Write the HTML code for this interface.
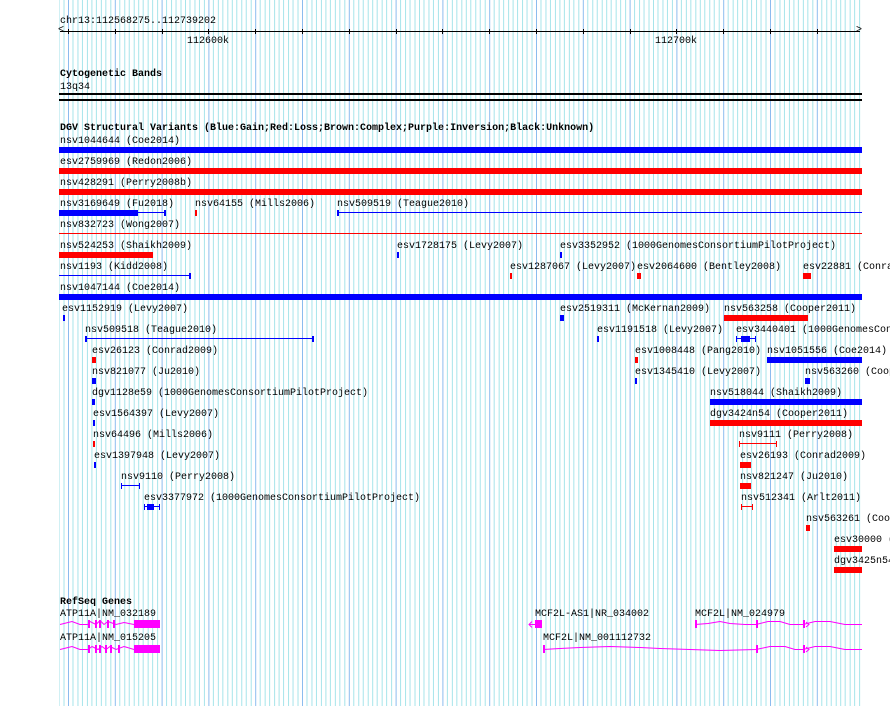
<!DOCTYPE html>
<html><head><meta charset="utf-8"><style>
html,body{margin:0;width:890px;height:706px;overflow:hidden}
body{background:#fff;position:relative;font-family:"Liberation Mono",monospace;font-size:10px;color:#000}
.t{position:absolute;line-height:10px;white-space:pre;margin-top:2px}
.h{font-weight:bold}
.b{position:absolute;height:6px}
.bl{background:#0000ff}.rd{background:#ff0000}.k{background:#000}
</style></head><body>
<svg style="position:absolute;left:0;top:0" width="890" height="706" shape-rendering="crispEdges">
<defs><pattern id="gp" patternUnits="userSpaceOnUse" x="21.2" y="0" width="46.8" height="706">
<rect x="0" y="0" width="1" height="706" fill="#8cbcee"/>
<rect x="4.68" y="0" width="1" height="706" fill="#a6e4ea"/>
<rect x="9.36" y="0" width="1" height="706" fill="#a6e4ea"/>
<rect x="14.04" y="0" width="1" height="706" fill="#a6e4ea"/>
<rect x="18.72" y="0" width="1" height="706" fill="#a6e4ea"/>
<rect x="23.4" y="0" width="1" height="706" fill="#a6e4ea"/>
<rect x="28.08" y="0" width="1" height="706" fill="#a6e4ea"/>
<rect x="32.76" y="0" width="1" height="706" fill="#a6e4ea"/>
<rect x="37.44" y="0" width="1" height="706" fill="#a6e4ea"/>
<rect x="42.12" y="0" width="1" height="706" fill="#a6e4ea"/>
</pattern></defs>
<rect x="59" y="0" width="802" height="706" fill="url(#gp)"/>
</svg>

<div class="t" style="left:60px;top:15px">chr13:112568275..112739202</div>
<div class="b k" style="left:60px;top:31px;width:800px;height:1px"></div>
<div class="t" style="left:58px;top:24px">&lt;</div>
<div class="t" style="left:856px;top:24px">&gt;</div>
<div class="b k" style="left:68px;top:29px;width:1px;height:5px"></div>
<div class="b k" style="left:115px;top:29px;width:1px;height:5px"></div>
<div class="b k" style="left:162px;top:29px;width:1px;height:5px"></div>
<div class="b k" style="left:208px;top:29px;width:1px;height:5px"></div>
<div class="b k" style="left:255px;top:29px;width:1px;height:5px"></div>
<div class="b k" style="left:302px;top:29px;width:1px;height:5px"></div>
<div class="b k" style="left:349px;top:29px;width:1px;height:5px"></div>
<div class="b k" style="left:396px;top:29px;width:1px;height:5px"></div>
<div class="b k" style="left:442px;top:29px;width:1px;height:5px"></div>
<div class="b k" style="left:489px;top:29px;width:1px;height:5px"></div>
<div class="b k" style="left:536px;top:29px;width:1px;height:5px"></div>
<div class="b k" style="left:583px;top:29px;width:1px;height:5px"></div>
<div class="b k" style="left:630px;top:29px;width:1px;height:5px"></div>
<div class="b k" style="left:676px;top:29px;width:1px;height:5px"></div>
<div class="b k" style="left:723px;top:29px;width:1px;height:5px"></div>
<div class="b k" style="left:770px;top:29px;width:1px;height:5px"></div>
<div class="b k" style="left:817px;top:29px;width:1px;height:5px"></div>
<div class="t" style="left:187px;top:35px">112600k</div>
<div class="t" style="left:655px;top:35px">112700k</div>

<div class="t h" style="left:60px;top:68px">Cytogenetic Bands</div>
<div class="t" style="left:60px;top:81px">13q34</div>
<div class="b k" style="left:59px;top:93px;width:803px;height:2px"></div>
<div class="b k" style="left:59px;top:99px;width:803px;height:2px"></div>

<div class="t h" style="left:60px;top:122px">DGV Structural Variants (Blue:Gain;Red:Loss;Brown:Complex;Purple:Inversion;Black:Unknown)</div>

<div class="t" style="left:60px;top:135px">nsv1044644 (Coe2014)</div>
<div class="b bl" style="left:59px;top:147px;width:803px"></div>
<div class="t" style="left:60px;top:156px">esv2759969 (Redon2006)</div>
<div class="b rd" style="left:59px;top:168px;width:803px"></div>
<div class="t" style="left:60px;top:177px">nsv428291 (Perry2008b)</div>
<div class="b rd" style="left:59px;top:189px;width:803px"></div>

<div class="t" style="left:60px;top:198px">nsv3169649 (Fu2018)</div>
<div class="b bl" style="left:59px;top:210px;width:79px"></div>
<div class="b bl" style="left:138px;top:212px;width:27px;height:1px"></div>
<div class="b bl" style="left:164px;top:210px;width:2px"></div>
<div class="t" style="left:195px;top:198px">nsv64155 (Mills2006)</div>
<div class="b rd" style="left:195px;top:210px;width:2px"></div>
<div class="t" style="left:337px;top:198px">nsv509519 (Teague2010)</div>
<div class="b bl" style="left:337px;top:210px;width:2px"></div>
<div class="b bl" style="left:337px;top:212px;width:525px;height:1px"></div>

<div class="t" style="left:60px;top:219px">nsv832723 (Wong2007)</div>
<div class="b rd" style="left:59px;top:233px;width:803px;height:1px"></div>

<div class="t" style="left:60px;top:240px">nsv524253 (Shaikh2009)</div>
<div class="b rd" style="left:59px;top:252px;width:94px"></div>
<div class="t" style="left:397px;top:240px">esv1728175 (Levy2007)</div>
<div class="b bl" style="left:397px;top:252px;width:2px"></div>
<div class="t" style="left:560px;top:240px">esv3352952 (1000GenomesConsortiumPilotProject)</div>
<div class="b bl" style="left:560px;top:252px;width:2px"></div>

<div class="t" style="left:60px;top:261px">nsv1193 (Kidd2008)</div>
<div class="b bl" style="left:59px;top:275px;width:131px;height:1px"></div>
<div class="b bl" style="left:189px;top:273px;width:2px"></div>
<div class="t" style="left:510px;top:261px">esv1287067 (Levy2007)</div>
<div class="b rd" style="left:510px;top:273px;width:2px"></div>
<div class="t" style="left:637px;top:261px">esv2064600 (Bentley2008)</div>
<div class="b rd" style="left:637px;top:273px;width:4px"></div>
<div class="t" style="left:803px;top:261px">esv22881 (Conrad2009)</div>
<div class="b rd" style="left:803px;top:273px;width:8px"></div>

<div class="t" style="left:60px;top:282px">nsv1047144 (Coe2014)</div>
<div class="b bl" style="left:59px;top:294px;width:803px"></div>

<div class="t" style="left:62px;top:303px">esv1152919 (Levy2007)</div>
<div class="b bl" style="left:63px;top:315px;width:2px"></div>
<div class="t" style="left:560px;top:303px">esv2519311 (McKernan2009)</div>
<div class="b bl" style="left:560px;top:315px;width:4px"></div>
<div class="t" style="left:724px;top:303px">nsv563258 (Cooper2011)</div>
<div class="b rd" style="left:724px;top:315px;width:84px"></div>

<div class="t" style="left:85px;top:324px">nsv509518 (Teague2010)</div>
<div class="b bl" style="left:85px;top:338px;width:228px;height:1px"></div>
<div class="b bl" style="left:85px;top:336px;width:2px"></div>
<div class="b bl" style="left:312px;top:336px;width:2px"></div>
<div class="t" style="left:597px;top:324px">esv1191518 (Levy2007)</div>
<div class="b bl" style="left:597px;top:336px;width:2px"></div>
<div class="t" style="left:736px;top:324px">esv3440401 (1000GenomesConsortiumPilotProject)</div>
<div class="b bl" style="left:736px;top:338px;width:20px;height:1px"></div>
<div class="b bl" style="left:741px;top:336px;width:9px"></div>
<div class="b bl" style="left:736px;top:336px;width:1px"></div>
<div class="b bl" style="left:755px;top:336px;width:1px"></div>

<div class="t" style="left:92px;top:345px">esv26123 (Conrad2009)</div>
<div class="b rd" style="left:92px;top:357px;width:4px"></div>
<div class="t" style="left:635px;top:345px">esv1008448 (Pang2010)</div>
<div class="b rd" style="left:635px;top:357px;width:3px"></div>
<div class="t" style="left:767px;top:345px">nsv1051556 (Coe2014)</div>
<div class="b bl" style="left:767px;top:357px;width:95px"></div>

<div class="t" style="left:92px;top:366px">nsv821077 (Ju2010)</div>
<div class="b bl" style="left:92px;top:378px;width:4px"></div>
<div class="t" style="left:635px;top:366px">esv1345410 (Levy2007)</div>
<div class="b bl" style="left:635px;top:378px;width:2px"></div>
<div class="t" style="left:805px;top:366px">nsv563260 (Cooper2011)</div>
<div class="b bl" style="left:805px;top:378px;width:5px"></div>

<div class="t" style="left:92px;top:387px">dgv1128e59 (1000GenomesConsortiumPilotProject)</div>
<div class="b bl" style="left:92px;top:399px;width:3px"></div>
<div class="t" style="left:710px;top:387px">nsv518044 (Shaikh2009)</div>
<div class="b bl" style="left:710px;top:399px;width:152px"></div>

<div class="t" style="left:93px;top:408px">esv1564397 (Levy2007)</div>
<div class="b bl" style="left:93px;top:420px;width:2px"></div>
<div class="t" style="left:710px;top:408px">dgv3424n54 (Cooper2011)</div>
<div class="b rd" style="left:710px;top:420px;width:152px"></div>

<div class="t" style="left:93px;top:429px">nsv64496 (Mills2006)</div>
<div class="b rd" style="left:93px;top:441px;width:2px"></div>
<div class="t" style="left:739px;top:429px">nsv9111 (Perry2008)</div>
<div class="b rd" style="left:739px;top:443px;width:38px;height:1px"></div>
<div class="b rd" style="left:739px;top:441px;width:1px"></div>
<div class="b rd" style="left:776px;top:441px;width:1px"></div>

<div class="t" style="left:94px;top:450px">esv1397948 (Levy2007)</div>
<div class="b bl" style="left:94px;top:462px;width:2px"></div>
<div class="t" style="left:740px;top:450px">esv26193 (Conrad2009)</div>
<div class="b rd" style="left:740px;top:462px;width:11px"></div>

<div class="t" style="left:121px;top:471px">nsv9110 (Perry2008)</div>
<div class="b bl" style="left:121px;top:485px;width:19px;height:1px"></div>
<div class="b bl" style="left:121px;top:483px;width:1px"></div>
<div class="b bl" style="left:139px;top:483px;width:1px"></div>
<div class="t" style="left:740px;top:471px">nsv821247 (Ju2010)</div>
<div class="b rd" style="left:740px;top:483px;width:11px"></div>

<div class="t" style="left:144px;top:492px">esv3377972 (1000GenomesConsortiumPilotProject)</div>
<div class="b bl" style="left:144px;top:506px;width:16px;height:1px"></div>
<div class="b bl" style="left:147px;top:504px;width:7px"></div>
<div class="b bl" style="left:144px;top:504px;width:1px"></div>
<div class="b bl" style="left:159px;top:504px;width:1px"></div>
<div class="t" style="left:741px;top:492px">nsv512341 (Arlt2011)</div>
<div class="b rd" style="left:741px;top:506px;width:12px;height:1px"></div>
<div class="b rd" style="left:741px;top:504px;width:1px"></div>
<div class="b rd" style="left:752px;top:504px;width:1px"></div>

<div class="t" style="left:806px;top:513px">nsv563261 (Cooper2011)</div>
<div class="b rd" style="left:806px;top:525px;width:4px"></div>
<div class="t" style="left:834px;top:534px">esv30000 (Conrad2009)</div>
<div class="b rd" style="left:834px;top:546px;width:28px"></div>
<div class="t" style="left:834px;top:555px">dgv3425n54 (Cooper2011)</div>
<div class="b rd" style="left:834px;top:567px;width:28px"></div>

<div class="t h" style="left:60px;top:596px">RefSeq Genes</div>
<div class="t" style="left:60px;top:608px">ATP11A|NM_032189</div>
<div class="t" style="left:60px;top:632px">ATP11A|NM_015205</div>
<svg style="position:absolute;left:0;top:0" width="890" height="706">
<g stroke="#ff00ff" fill="none" stroke-width="1">
<polyline points="60,624.5 72,621.5 80,624.5 88,624.5 90,621.5 96,624.5 100,620.5 104,624.5 108,621.5 116,624.5 124,622.5 134,624.5"/>
<polyline points="60,649.5 72,646.5 80,649.5 88,649.5 92,646.5 98,649.5 102,646.5 106,649.5 110,646.5 116,649.5 124,646.5 134,649.5"/>
<path d="M536,624.5 L529,624.5 M532,621.5 L529,624.5 L532,627.5"/>
<polyline points="695,624.5 708,623.5 720,621.5 730,623.5 745,624.5 756,624.5 768,621.5 780,621.5 790,624.5 803,624.5 815,621.5 830,621.5 845,624.5 862,624.5"/>
<polyline points="543,649.5 560,648.5 580,647.5 610,646.5 640,647.5 660,648.5 690,649.5 720,650.5 756,649.5 770,646.5 785,646.5 795,649.5 803,649.5 815,646.5 830,646.5 845,649.5 862,649.5"/>
<path d="M806,622 L809,624.5 L806,627 M806,647 L809,649.5 L806,652"/>
</g>
<g fill="#ff00ff">
<rect x="134" y="620" width="26" height="8"/>
<rect x="134" y="645" width="26" height="8"/>
<rect x="88" y="620" width="2" height="8"/><rect x="95" y="620" width="2" height="8"/><rect x="99" y="620" width="2" height="8"/><rect x="107" y="620" width="2" height="8"/><rect x="113" y="620" width="2" height="8"/>
<rect x="88" y="645" width="2" height="8"/><rect x="95" y="645" width="2" height="8"/><rect x="99" y="645" width="2" height="8"/><rect x="105" y="645" width="2" height="8"/><rect x="110" y="645" width="2" height="8"/><rect x="118" y="645" width="2" height="8"/>
<rect x="535" y="620" width="7" height="8"/>
<rect x="695" y="620" width="2" height="8"/><rect x="756" y="620" width="2" height="8"/><rect x="803" y="620" width="2" height="8"/>
<rect x="543" y="645" width="2" height="8"/><rect x="756" y="645" width="2" height="8"/><rect x="803" y="645" width="2" height="8"/>
</g>
</svg>
<div class="t" style="left:535px;top:608px">MCF2L-AS1|NR_034002</div>
<div class="t" style="left:695px;top:608px">MCF2L|NM_024979</div>
<div class="t" style="left:543px;top:632px">MCF2L|NM_001112732</div>
</body></html>
